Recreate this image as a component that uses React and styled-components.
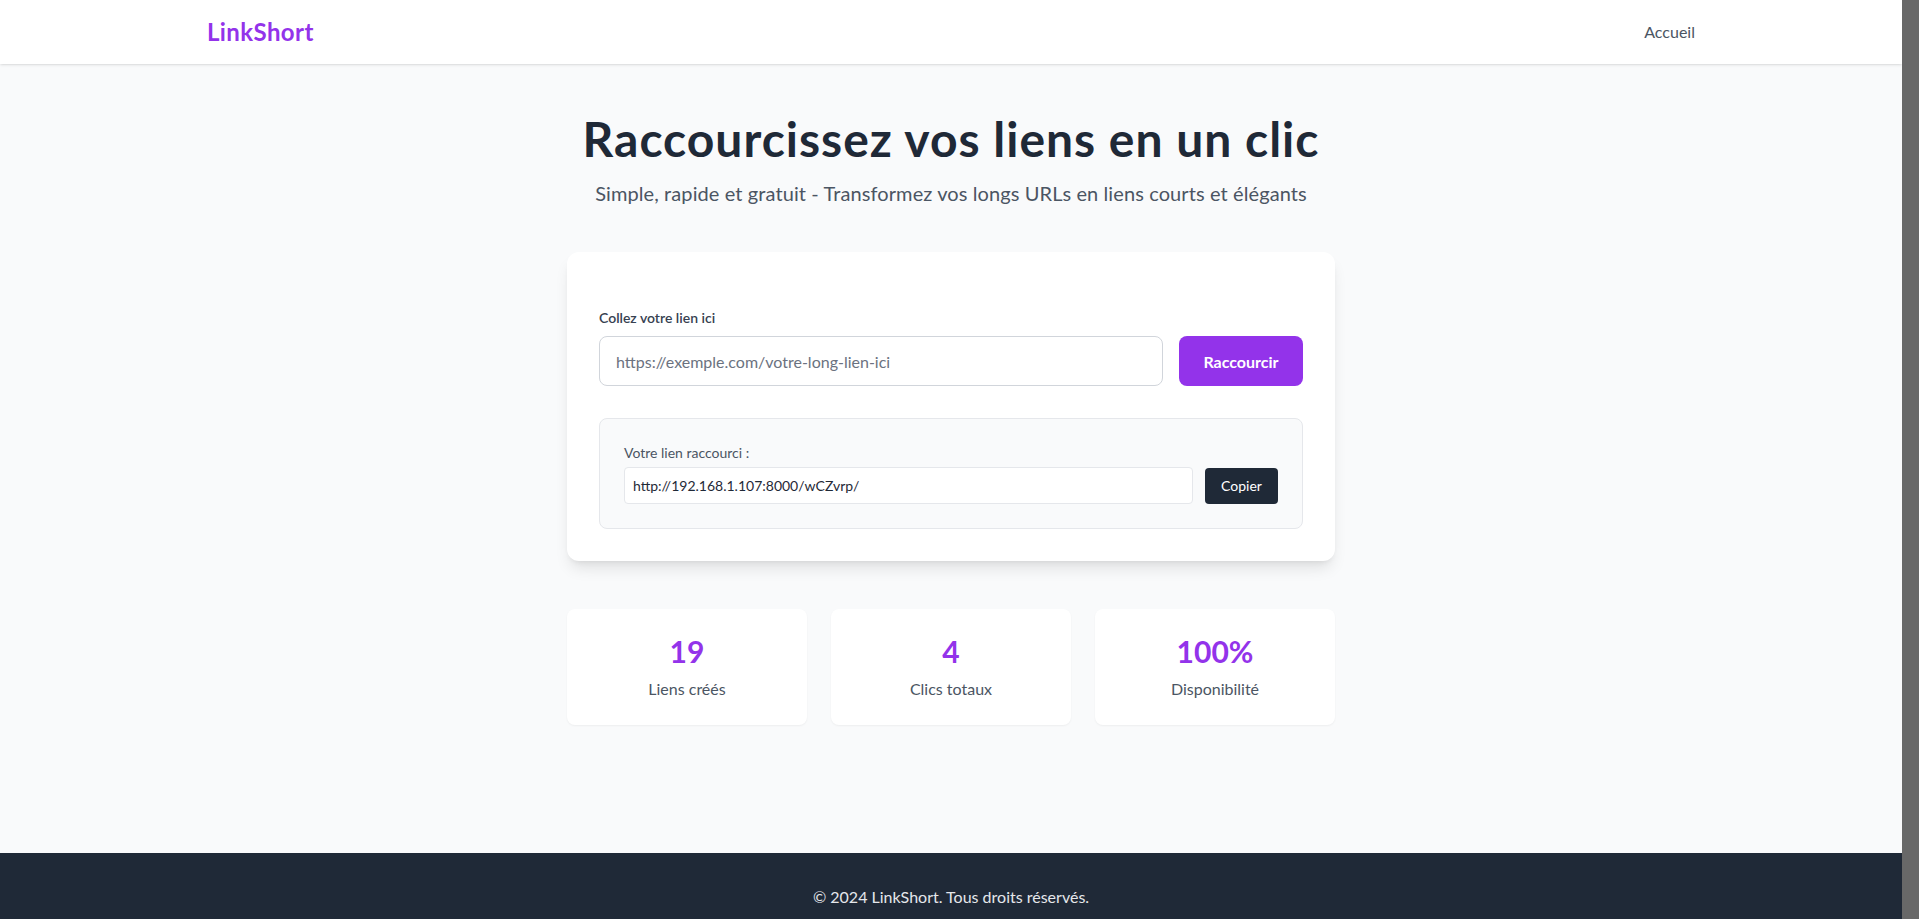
import React, { useState } from "react";
import styled, { createGlobalStyle } from "styled-components";

// The reference shows a 17px browser scrollbar on the right; the page is
// laid out in the remaining width and the strip takes the thumb colour.
const GlobalStyle = createGlobalStyle`
  html {
    background: #686868;
  }
  body {
    margin: 0 17px 0 0;
    font-family: Lato, "Noto Sans", "Liberation Sans", sans-serif;
    background: #f9fafb;
    color: #1f2937;
  }
  * {
    box-sizing: border-box;
  }
`;

const stats = [
  { value: "19", label: "Liens créés" },
  { value: "4", label: "Clics totaux" },
  { value: "100%", label: "Disponibilité" },
];

const App = () => {
  const [url, setUrl] = useState("");
  const shortUrl = "http://192.168.1.107:8000/wCZvrp/";

  return (
    <Page>
      <GlobalStyle />
      <Header>
        <Nav>
          <Logo href="#">LinkShort</Logo>
          <NavLink href="#">Accueil</NavLink>
        </Nav>
      </Header>

      <Main>
        <Hero>
          <Title>Raccourcissez vos liens en un clic</Title>
          <Subtitle>
            Simple, rapide et gratuit - Transformez vos longs URLs en liens courts et élégants
          </Subtitle>
        </Hero>

        <Card>
          <form onSubmit={(e) => e.preventDefault()}>
            <Label htmlFor="url">Collez votre lien ici</Label>
            <FormRow>
              <UrlInput
                id="url"
                type="text"
                placeholder="https://exemple.com/votre-long-lien-ici"
                value={url}
                onChange={(e) => setUrl(e.target.value)}
              />
              <SubmitButton type="submit">Raccourcir</SubmitButton>
            </FormRow>
          </form>

          <ResultBox>
            <ResultLabel>Votre lien raccourci :</ResultLabel>
            <ResultRow>
              <ShortInput type="text" readOnly value={shortUrl} />
              <CopyButton type="button">Copier</CopyButton>
            </ResultRow>
          </ResultBox>
        </Card>

        <StatsGrid>
          {stats.map((s) => (
            <StatCard key={s.label}>
              <StatValue>{s.value}</StatValue>
              <StatLabel>{s.label}</StatLabel>
            </StatCard>
          ))}
        </StatsGrid>
      </Main>

      <Footer>© 2024 LinkShort. Tous droits réservés.</Footer>
    </Page>
  );
};

export default App;

const Page = styled.div`
  min-height: 100vh;
  display: flex;
  flex-direction: column;
`;

const Header = styled.header`
  background: #fff;
  box-shadow: 0 1px 3px rgba(0, 0, 0, 0.1), 0 1px 2px -1px rgba(0, 0, 0, 0.1);
`;

const Nav = styled.nav`
  max-width: 1536px;
  margin: 0 auto;
  padding: 16px 24px;
  display: flex;
  justify-content: space-between;
  align-items: center;
`;

const Logo = styled.a`
  font-size: 24px;
  line-height: 32px;
  font-weight: 700;
  letter-spacing: 0.4px;
  color: #9333ea;
  text-decoration: none;
`;

const NavLink = styled.a`
  font-size: 16px;
  line-height: 24px;
  color: #4b5563;
  text-decoration: none;
`;

const Main = styled.main`
  flex: 1;
  padding: 51px 16px 128px;
`;

const Hero = styled.div`
  text-align: center;
  margin-bottom: 45px;
`;

const Title = styled.h1`
  margin: 0 0 16px;
  font-size: 48px;
  line-height: 48px;
  font-weight: 700;
  letter-spacing: 1px;
  color: #1f2937;
`;

const Subtitle = styled.p`
  margin: 0;
  font-size: 20px;
  line-height: 28px;
  letter-spacing: 0.1px;
  color: #4b5563;
`;

const Card = styled.div`
  max-width: 768px;
  margin: 0 auto;
  background: #fff;
  border-radius: 12px;
  padding: 56px 32px 32px;
  box-shadow: 0 10px 15px -3px rgba(0, 0, 0, 0.1), 0 4px 6px -4px rgba(0, 0, 0, 0.1);
`;

const Label = styled.label`
  display: block;
  margin-bottom: 8px;
  font-size: 14px;
  line-height: 20px;
  font-weight: 600;
  color: #374151;
`;

const FormRow = styled.div`
  display: flex;
  gap: 16px;
`;

const UrlInput = styled.input`
  flex: 1;
  height: 50px;
  padding: 0 16px;
  border: 1px solid #d1d5db;
  border-radius: 8px;
  font-family: inherit;
  font-size: 16px;
  color: #1f2937;
  outline: none;

  &::placeholder {
    color: #6b7280;
  }
`;

const SubmitButton = styled.button`
  width: 124px;
  height: 50px;
  border: 0;
  border-radius: 8px;
  background: #9333ea;
  color: #fff;
  font-family: inherit;
  font-size: 16px;
  font-weight: 700;
  cursor: pointer;
`;

const ResultBox = styled.div`
  margin-top: 32px;
  padding: 24px;
  background: #f9fafb;
  border: 1px solid #e5e7eb;
  border-radius: 8px;
`;

const ResultLabel = styled.p`
  margin: 0 0 4px;
  font-size: 14px;
  line-height: 20px;
  color: #4b5563;
`;

const ResultRow = styled.div`
  display: flex;
  align-items: center;
  gap: 12px;
`;

const ShortInput = styled.input`
  flex: 1;
  height: 37px;
  padding: 0 8px;
  background: #fff;
  border: 1px solid #e5e7eb;
  border-radius: 4px;
  font-family: inherit;
  font-size: 14px;
  color: #1f2937;
  outline: none;
`;

const CopyButton = styled.button`
  width: 73px;
  height: 36px;
  border: 0;
  border-radius: 4px;
  background: #1f2937;
  color: #fff;
  font-family: inherit;
  font-size: 14px;
  cursor: pointer;
`;

const StatsGrid = styled.div`
  max-width: 768px;
  margin: 48px auto 0;
  display: grid;
  grid-template-columns: repeat(3, 1fr);
  gap: 24px;
`;

const StatCard = styled.div`
  background: #fff;
  border-radius: 8px;
  padding: 24px;
  text-align: center;
  box-shadow: 0 1px 2px rgba(0, 0, 0, 0.05);
`;

const StatValue = styled.div`
  font-size: 30px;
  line-height: 36px;
  font-weight: 700;
  color: #9333ea;
`;

const StatLabel = styled.div`
  margin-top: 8px;
  font-size: 16px;
  line-height: 24px;
  color: #4b5563;
`;

const Footer = styled.footer`
  background: #1f2937;
  color: #e5e7eb;
  padding: 32px 16px;
  text-align: center;
  font-size: 16px;
  line-height: 24px;
`;
